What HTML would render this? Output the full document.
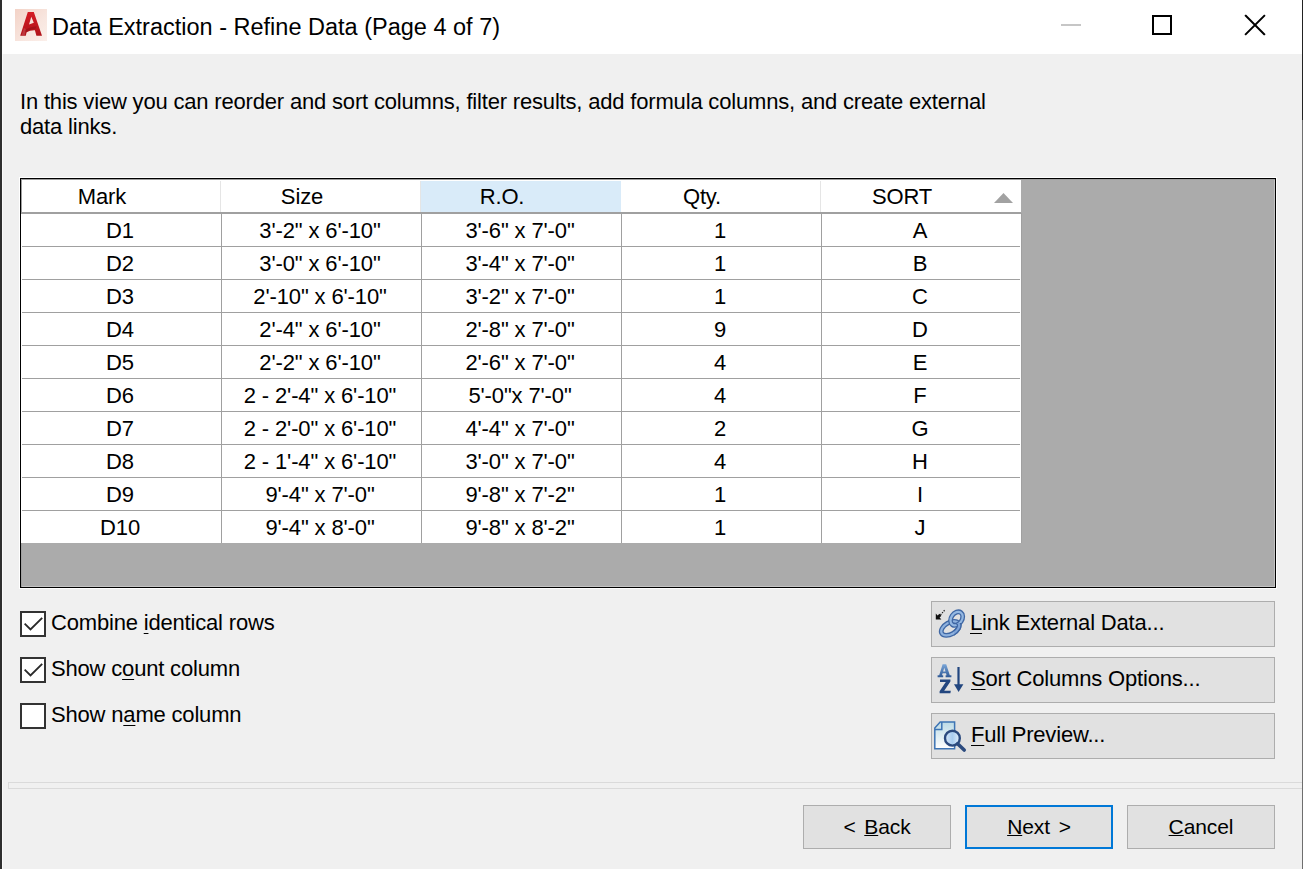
<!DOCTYPE html>
<html><head><meta charset="utf-8">
<style>
*{margin:0;padding:0;box-sizing:border-box}
html,body{width:1303px;height:869px;overflow:hidden;background:#f0f0f0;font-family:"Liberation Sans",sans-serif;color:#000}
.abs{position:absolute}
#lstrip{left:0;top:0;width:2px;height:869px;background:#2e2e2e}
#lwhite{left:2px;top:54px;width:1px;height:815px;background:#fafafa}
#rborder{left:1302px;top:0;width:1px;height:869px;background:linear-gradient(#222 0,#222 120px,#6e6e6e 120px,#6e6e6e 100%)}
#title{left:2px;top:0;width:1300px;height:54px;background:#fff}
.t{position:absolute;white-space:nowrap;font-size:22px;line-height:25px;letter-spacing:-0.18px}
#grid{left:19px;top:177px;width:1258px;height:412px;border:1px solid #fff}
#gridin{left:20px;top:178px;width:1256px;height:410px;border:1px solid #000;border-top-color:#000;background:#ababab;box-shadow:inset 1px 1px 0 #a0a0a0,inset -1px -1px 0 #c4c4c4}
#hdrrow{left:22px;top:180px;width:999px;height:34px;background:#fff;border-bottom:2px solid #a0a0a0}
.hsep{position:absolute;top:181px;width:1px;height:31px;background:#e5e5e5}
.hcell{position:absolute;top:180px;height:33px;line-height:33px;text-align:center;font-size:22px;letter-spacing:-0.13px;white-space:nowrap}
.row{position:absolute;left:20px;width:1000px;height:33px}
.row div{position:absolute;top:0;height:33px;width:200px;text-align:center;line-height:33px;font-size:22px;letter-spacing:-0.13px;white-space:nowrap}
.btn{position:absolute;background:#e1e1e1;border:1px solid #adadad}
.cb{position:absolute;left:20px;width:26px;height:26px;border:2px solid #333;background:#fff}
.b2 .ul{text-underline-offset:1px}
.ul{text-decoration:underline;text-underline-offset:3px;text-decoration-thickness:1px}
</style></head><body>
<div class="abs" id="title"></div>
<div class="abs" id="lstrip"></div>
<div class="abs" id="lwhite"></div>
<div class="abs" id="rborder"></div>

<!-- title icon -->
<svg class="abs" style="left:15px;top:9px" width="32" height="32" viewBox="0 0 32 32">
<defs><linearGradient id="ibg" x1="0" y1="0" x2="1" y2="1"><stop offset="0" stop-color="#f3d3c7"/><stop offset="0.6" stop-color="#f8e6df"/><stop offset="1" stop-color="#fbefea"/></linearGradient>
<linearGradient id="ired" x1="0" y1="0" x2="0" y2="1"><stop offset="0" stop-color="#d41b23"/><stop offset="1" stop-color="#b0141b"/></linearGradient></defs>
<rect width="32" height="32" fill="url(#ibg)"/>
<path fill-rule="evenodd" d="M5.2 26.8 L12.8 3 L18.8 3 L27 26.8 L21.4 26.8 L19.9 21.2 Q15 21 11.6 23.2 L10.8 26.8 Z M16.3 7.8 L14.0 15.6 L18.8 13.8 Z" fill="url(#ired)"/>
<path d="M9.5 21.5 Q15 17.5 21.5 17.2 L20.6 19.8 Q15.5 19.8 11 23.4 Z" fill="#9e1118" opacity="0.8"/>
<path d="M6.5 26.6 L9 19 L10.8 20 L9.8 26.6 Z" fill="#c85a5e" opacity="0.5"/>
</svg>
<div class="t" style="left:52px;top:13px;font-size:23.5px;line-height:28px;letter-spacing:0">Data Extraction - Refine Data (Page 4 of 7)</div>

<!-- window controls -->
<div class="abs" style="left:1061px;top:24px;width:20px;height:2px;background:#c6c6c6"></div>
<div class="abs" style="left:1152px;top:15px;width:20px;height:20px;border:2px solid #000"></div>
<svg class="abs" style="left:1244px;top:14px" width="22" height="22" viewBox="0 0 22 22"><path d="M1.8 1.8 L20.2 20.2 M20.2 1.8 L1.8 20.2" stroke="#000" stroke-width="2" stroke-linecap="square"/></svg>

<div class="t" style="left:20px;top:89px">In this view you can reorder and sort columns, filter results, add formula columns, and create external<br>data links.</div>

<div class="abs" id="grid"></div>
<div class="abs" id="gridin"></div>
<div class="abs" id="hdrrow"></div>
<div class="abs" style="left:421px;top:181px;width:200px;height:31px;background:#d9ebf9"></div>
<div class="hsep" style="left:220px"></div>
<div class="hsep" style="left:420px"></div>
<div class="hsep" style="left:820px"></div>
<div class="hcell" style="left:21px;width:162px">Mark</div>
<div class="hcell" style="left:221px;width:162px">Size</div>
<div class="hcell" style="left:421px;width:162px">R.O.</div>
<div class="hcell" style="left:621px;width:162px">Qty.</div>
<div class="hcell" style="left:821px;width:162px">SORT</div>
<svg class="abs" style="left:994px;top:193px" width="19" height="10" viewBox="0 0 19 10"><path d="M0 10 L9.5 0 L19 10 Z" fill="#a2a2a2"/></svg>

<div class="abs" style="left:21px;top:214px;width:1000px;height:329px;background:#fff"></div>
<div class="abs" style="left:22px;top:246px;width:998px;height:1px;background:#a0a0a0"></div>
<div class="abs" style="left:22px;top:279px;width:998px;height:1px;background:#a0a0a0"></div>
<div class="abs" style="left:22px;top:312px;width:998px;height:1px;background:#a0a0a0"></div>
<div class="abs" style="left:22px;top:345px;width:998px;height:1px;background:#a0a0a0"></div>
<div class="abs" style="left:22px;top:378px;width:998px;height:1px;background:#a0a0a0"></div>
<div class="abs" style="left:22px;top:411px;width:998px;height:1px;background:#a0a0a0"></div>
<div class="abs" style="left:22px;top:444px;width:998px;height:1px;background:#a0a0a0"></div>
<div class="abs" style="left:22px;top:477px;width:998px;height:1px;background:#a0a0a0"></div>
<div class="abs" style="left:22px;top:510px;width:998px;height:1px;background:#a0a0a0"></div>
<div class="abs" style="left:221px;top:213px;width:1px;height:330px;background:#a0a0a0"></div>
<div class="abs" style="left:421px;top:213px;width:1px;height:330px;background:#a0a0a0"></div>
<div class="abs" style="left:621px;top:213px;width:1px;height:330px;background:#a0a0a0"></div>
<div class="abs" style="left:821px;top:213px;width:1px;height:330px;background:#a0a0a0"></div>
<div class="abs" style="left:1021px;top:213px;width:1px;height:330px;background:#a0a0a0"></div>
<div class="row" style="top:214px"><div style="left:0px">D1</div><div style="left:200px">3'-2" x 6'-10"</div><div style="left:400px">3'-6" x 7'-0"</div><div style="left:600px">1</div><div style="left:800px">A</div></div>
<div class="row" style="top:247px"><div style="left:0px">D2</div><div style="left:200px">3'-0" x 6'-10"</div><div style="left:400px">3'-4" x 7'-0"</div><div style="left:600px">1</div><div style="left:800px">B</div></div>
<div class="row" style="top:280px"><div style="left:0px">D3</div><div style="left:200px">2'-10" x 6'-10"</div><div style="left:400px">3'-2" x 7'-0"</div><div style="left:600px">1</div><div style="left:800px">C</div></div>
<div class="row" style="top:313px"><div style="left:0px">D4</div><div style="left:200px">2'-4" x 6'-10"</div><div style="left:400px">2'-8" x 7'-0"</div><div style="left:600px">9</div><div style="left:800px">D</div></div>
<div class="row" style="top:346px"><div style="left:0px">D5</div><div style="left:200px">2'-2" x 6'-10"</div><div style="left:400px">2'-6" x 7'-0"</div><div style="left:600px">4</div><div style="left:800px">E</div></div>
<div class="row" style="top:379px"><div style="left:0px">D6</div><div style="left:200px">2 - 2'-4" x 6'-10"</div><div style="left:400px">5'-0"x 7'-0"</div><div style="left:600px">4</div><div style="left:800px">F</div></div>
<div class="row" style="top:412px"><div style="left:0px">D7</div><div style="left:200px">2 - 2'-0" x 6'-10"</div><div style="left:400px">4'-4" x 7'-0"</div><div style="left:600px">2</div><div style="left:800px">G</div></div>
<div class="row" style="top:445px"><div style="left:0px">D8</div><div style="left:200px">2 - 1'-4" x 6'-10"</div><div style="left:400px">3'-0" x 7'-0"</div><div style="left:600px">4</div><div style="left:800px">H</div></div>
<div class="row" style="top:478px"><div style="left:0px">D9</div><div style="left:200px">9'-4" x 7'-0"</div><div style="left:400px">9'-8" x 7'-2"</div><div style="left:600px">1</div><div style="left:800px">I</div></div>
<div class="row" style="top:511px"><div style="left:0px">D10</div><div style="left:200px">9'-4" x 8'-0"</div><div style="left:400px">9'-8" x 8'-2"</div><div style="left:600px">1</div><div style="left:800px">J</div></div>

<!-- checkboxes -->
<div class="cb" style="top:611px"></div>
<svg class="abs" style="left:24px;top:617px" width="20" height="14" viewBox="0 0 20 14"><path d="M0.6 6.6 L6.5 12.4 L18.2 0.8" fill="none" stroke="#2a2a2a" stroke-width="1.9"/></svg>
<div class="t" style="left:51px;top:610px">Combine <span class="ul">i</span>dentical rows</div>
<div class="cb" style="top:657px"></div>
<svg class="abs" style="left:24px;top:663px" width="20" height="14" viewBox="0 0 20 14"><path d="M0.6 6.6 L6.5 12.4 L18.2 0.8" fill="none" stroke="#2a2a2a" stroke-width="1.9"/></svg>
<div class="t" style="left:51px;top:656px">Show c<span class="ul">o</span>unt column</div>
<div class="cb" style="top:703px"></div>
<div class="t" style="left:51px;top:702px">Show n<span class="ul">a</span>me column</div>

<!-- right buttons -->
<div class="btn" style="left:931px;top:601px;width:344px;height:46px"></div>
<svg class="abs" style="left:932px;top:606px" width="36" height="36" viewBox="0 0 36 36">
<g fill="none">
<ellipse cx="18.2" cy="22.4" rx="9.8" ry="5.8" transform="rotate(-30 18.2 22.4)" stroke="#3f67a4" stroke-width="4.8"/>
<ellipse cx="18.2" cy="22.4" rx="9.8" ry="5.8" transform="rotate(-30 18.2 22.4)" stroke="#8fb2de" stroke-width="2.2"/>
<ellipse cx="24.6" cy="12.6" rx="7.4" ry="5.4" transform="rotate(-55 24.6 12.6)" stroke="#3f67a4" stroke-width="4.8"/>
<ellipse cx="24.6" cy="12.6" rx="7.4" ry="5.4" transform="rotate(-55 24.6 12.6)" stroke="#94b8e2" stroke-width="2.2"/>
<defs><clipPath id="clr"><rect x="22" y="17" width="14" height="19"/></clipPath></defs>
<g clip-path="url(#clr)"><ellipse cx="18.2" cy="22.4" rx="9.8" ry="5.8" transform="rotate(-30 18.2 22.4)" stroke="#3f67a4" stroke-width="4.8"/>
<ellipse cx="18.2" cy="22.4" rx="9.8" ry="5.8" transform="rotate(-30 18.2 22.4)" stroke="#7fa5d8" stroke-width="2.2"/></g>
</g>
<path d="M3.8 7.6 L3.8 13.4 L9.4 13.4 L7.6 11.6 L9.4 9.8 L7.4 7.8 L5.6 9.4 Z" fill="#111"/>
<path d="M8.5 8.8 L12.8 4" stroke="#222" stroke-width="1.2" stroke-dasharray="1.3 1.1"/>
</svg>
<div class="t" style="left:970px;top:610px"><span class="ul">L</span>ink External Data...</div>
<div class="btn" style="left:931px;top:657px;width:344px;height:46px"></div>
<svg class="abs" style="left:932px;top:662px" width="36" height="36" viewBox="0 0 36 36">
<defs><linearGradient id="ga" x1="0" y1="0" x2="0" y2="1"><stop offset="0" stop-color="#7aa6d8"/><stop offset="1" stop-color="#2f5996"/></linearGradient></defs>
<path fill-rule="evenodd" d="M10.6 2.2 L14.2 2.2 L17.8 13.2 L19.4 13.2 L19.4 15.2 L13.6 15.2 L13.6 13.2 L14.6 13.2 L14 11.2 L10.6 11.2 L10 13.2 L11.2 13.2 L11.2 15.2 L5.6 15.2 L5.6 13.2 L7.2 13.2 Z M12.3 5.8 L11.1 9.4 L13.5 9.4 Z" fill="url(#ga)"/>
<path d="M8 17.5 L18.4 17.5 L18.4 19.6 L12.2 28.8 L18.8 28.8 L18.4 31.2 L7.6 31.2 L7.6 29.2 L13.8 20 L8 20 Z" fill="#22467f"/>
<path d="M26.5 5 L26.5 23" stroke="#22467f" stroke-width="2.2"/>
<path d="M22 22.2 L31.4 22.2 L26.6 30 Z" fill="#22467f"/>
</svg>
<div class="t" style="left:971px;top:666px"><span class="ul">S</span>ort Columns Options...</div>
<div class="btn" style="left:931px;top:713px;width:344px;height:46px"></div>
<svg class="abs" style="left:930px;top:716px" width="40" height="40" viewBox="0 0 40 40">
<defs><linearGradient id="gd" x1="0" y1="0" x2="0" y2="1"><stop offset="0" stop-color="#bcdbe6"/><stop offset="1" stop-color="#ffffff"/></linearGradient>
<linearGradient id="gm" x1="0" y1="0" x2="1" y2="0"><stop offset="0" stop-color="#d6e8f8"/><stop offset="0.5" stop-color="#a9cdf0"/><stop offset="1" stop-color="#e4f0fa"/></linearGradient></defs>
<path d="M4.8 12 L10.2 6 L24.6 6 L24.6 32.8 L4.8 32.8 Z" fill="url(#gd)" stroke="#3d74b4" stroke-width="1.5"/>
<path d="M4.8 13.6 L11.8 13.6 L11.8 6" fill="none" stroke="#3d74b4" stroke-width="1.5"/>
<circle cx="22.4" cy="22.2" r="7.4" fill="url(#gm)" stroke="#2b4a7e" stroke-width="2.4"/>
<path d="M27.6 27.8 L34.2 34" stroke="#2b4a7e" stroke-width="3.6" stroke-linecap="round"/>
</svg>
<div class="t" style="left:971px;top:722px"><span class="ul">F</span>ull Preview...</div>

<!-- separator -->
<div class="abs" style="left:8px;top:782px;width:1294px;height:7px;border:1px solid #dadada;border-right:none"></div>

<!-- bottom buttons -->
<div class="btn" style="left:803px;top:805px;width:148px;height:44px"></div>
<div class="t b2" style="left:803px;top:814px;width:148px;text-align:center;font-size:21px;letter-spacing:-0.1px;word-spacing:3px">&lt; <span class="ul">B</span>ack</div>
<div class="btn" style="left:965px;top:805px;width:148px;height:44px;border:2px solid #0078d7"></div>
<div class="t b2" style="left:965px;top:814px;width:148px;text-align:center;font-size:21px;letter-spacing:-0.1px;word-spacing:3px"><span class="ul">N</span>ext &gt;</div>
<div class="btn" style="left:1127px;top:805px;width:148px;height:44px"></div>
<div class="t b2" style="left:1127px;top:814px;width:148px;text-align:center;font-size:21px;letter-spacing:-0.1px"><span class="ul">C</span>ancel</div>

</body></html>
